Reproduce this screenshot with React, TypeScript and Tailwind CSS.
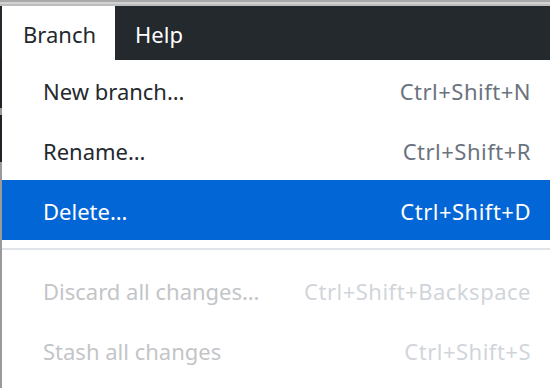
import React from 'react';

type Item = { label: string; shortcut: string; active?: boolean; disabled?: boolean };

const topItems: Item[] = [
  { label: 'New branch…', shortcut: 'Ctrl+Shift+N' },
  { label: 'Rename…', shortcut: 'Ctrl+Shift+R' },
  { label: 'Delete…', shortcut: 'Ctrl+Shift+D', active: true },
];

const bottomItems: Item[] = [
  { label: 'Discard all changes…', shortcut: 'Ctrl+Shift+Backspace', disabled: true },
  { label: 'Stash all changes', shortcut: 'Ctrl+Shift+S', disabled: true },
];

const MenuRow: React.FC<{ item: Item }> = ({ item }) => {
  const rowCls = item.active ? 'bg-[#0366d6] text-white' : item.disabled ? 'text-[#c3c5c8]' : 'text-[#24292e]';
  const keyCls = item.active ? 'text-white' : item.disabled ? 'text-[#d1d5da]' : 'text-[#6a737d]';
  return (
    <div className={`h-[60px] flex items-center justify-between pl-[41px] pr-[19px] pt-[2px] ${rowCls}`}>
      <span>{item.label}</span>
      <span className={`tracking-[0.5px] ${keyCls}`}>{item.shortcut}</span>
    </div>
  );
};

const App: React.FC = () => {
  return (
    <div
      className="w-[550px] h-[388px] overflow-hidden flex flex-col bg-white text-[22px] leading-none"
      style={{ fontFamily: '"Noto Sans", "Open Sans", sans-serif' }}
    >
      {/* window chrome strip */}
      <div className="h-[6px] flex flex-col shrink-0">
        <div className="h-[2px] bg-[#a9a9a9]" />
        <div className="h-[2px] bg-[#d2d2d2]" />
        <div className="h-[2px] bg-[#bdbdbd]" />
      </div>

      {/* menu bar */}
      <div className="h-[54px] flex bg-[#24292e] shrink-0">
        <div className="w-[2px]" />
        <div className="w-[113px] bg-white text-[#24292e] flex items-center pl-[21px] pt-[2px]">Branch</div>
        <div className="text-white flex items-center pl-[20px] pt-[2px]">Help</div>
      </div>

      <div className="flex flex-1">
        {/* app behind the menu */}
        <div className="w-[2px] flex flex-col">
          <div className="h-[48px] bg-[#1f2327]" />
          <div className="h-[7px] bg-[#9a9a9a]" />
          <div className="h-[47px] bg-[#1f2327]" />
          <div className="flex-1 bg-[#9a9a9a]" />
        </div>

        {/* dropdown */}
        <div className="flex-1 flex flex-col">
          {topItems.map((it) => (
            <MenuRow key={it.label} item={it} />
          ))}
          <div className="h-[8px]" />
          <div className="h-[2px] bg-[#e1e4e8]" />
          <div className="h-[10px]" />
          {bottomItems.map((it) => (
            <MenuRow key={it.label} item={it} />
          ))}
        </div>
      </div>
    </div>
  );
};

export default App;
